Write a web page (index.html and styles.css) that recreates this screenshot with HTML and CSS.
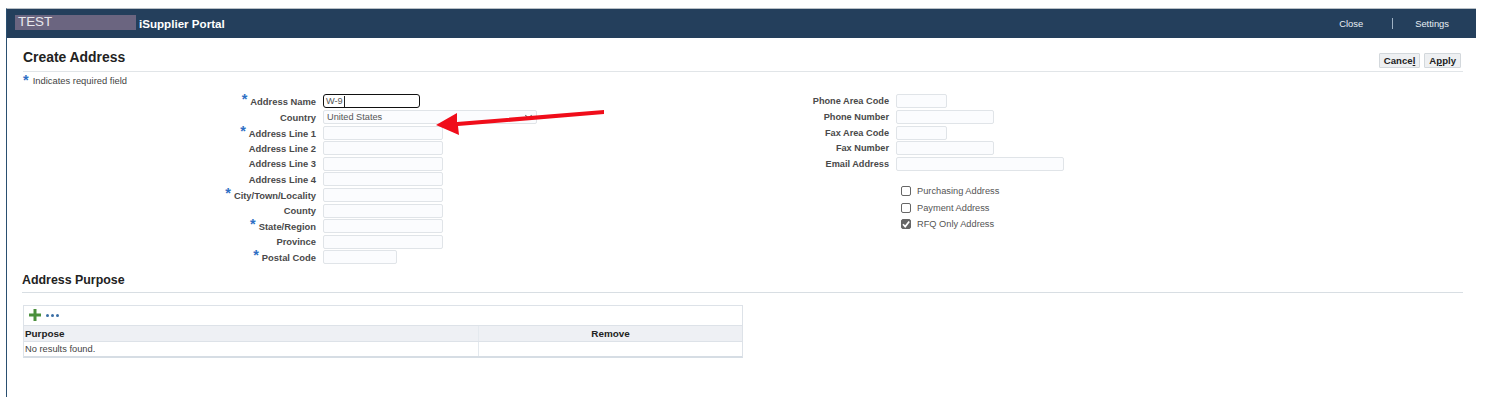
FILE: index.html
```html
<!DOCTYPE html>
<html lang="en">
<head>
<meta charset="utf-8">
<title>Create Address</title>
<link rel="stylesheet" href="styles.css">
</head>
<body>
<div class="frame">
  <header class="topbar">
    <div class="brand"><span class="env">TEST</span><span class="portal">iSupplier Portal</span></div>
    <nav class="topnav"><span class="nav-close">Close</span><span class="nav-sep"></span><span class="nav-settings">Settings</span></nav>
  </header>
  <main class="content">
    <div class="title-row">
      <h1 class="h1">Create Address</h1>
      <div class="actions"><button class="btn">Cance<u>l</u></button><button class="btn">A<u>p</u>ply</button></div>
    </div>
    <div class="req-note"><span class="star">*</span><span>Indicates required field</span></div>
    <div class="form">
      <div class="form-left">
        <div class="row"><label class="lbl"><span class="star">*</span>Address Name</label><div class="inp focus">W-9<span class="caret"></span></div></div>
        <div class="row"><label class="lbl">Country</label><div class="inp select">United States<span class="sel-arrow"></span></div></div>
        <div class="row"><label class="lbl"><span class="star">*</span>Address Line 1</label><div class="inp w120"></div></div>
        <div class="row"><label class="lbl">Address Line 2</label><div class="inp w120"></div></div>
        <div class="row"><label class="lbl">Address Line 3</label><div class="inp w120"></div></div>
        <div class="row"><label class="lbl">Address Line 4</label><div class="inp w120"></div></div>
        <div class="row"><label class="lbl"><span class="star">*</span>City/Town/Locality</label><div class="inp w120"></div></div>
        <div class="row"><label class="lbl">County</label><div class="inp w120"></div></div>
        <div class="row"><label class="lbl"><span class="star">*</span>State/Region</label><div class="inp w120"></div></div>
        <div class="row"><label class="lbl">Province</label><div class="inp w120"></div></div>
        <div class="row"><label class="lbl"><span class="star">*</span>Postal Code</label><div class="inp w74"></div></div>
      </div>
      <div class="form-right">
        <div class="row"><label class="lbl">Phone Area Code</label><div class="inp w51"></div></div>
        <div class="row"><label class="lbl">Phone Number</label><div class="inp w98"></div></div>
        <div class="row"><label class="lbl">Fax Area Code</label><div class="inp w51"></div></div>
        <div class="row"><label class="lbl">Fax Number</label><div class="inp w98"></div></div>
        <div class="row"><label class="lbl">Email Address</label><div class="inp w168"></div></div>
        <div class="checks">
          <div class="check"><span class="box"></span>Purchasing Address</div>
          <div class="check"><span class="box"></span>Payment Address</div>
          <div class="check"><span class="box on"><svg viewBox="0 0 10 10" width="10" height="10"><path d="M2 5.2 4.2 7.6 8.2 2.4" fill="none" stroke="#fff" stroke-width="1.7"/></svg></span>RFQ Only Address</div>
        </div>
      </div>
    </div>
    <h2 class="h2">Address Purpose</h2>
    <div class="table-wrap">
      <div class="toolbar">
        <svg class="plus" viewBox="0 0 12 12" width="12" height="12"><path d="M4.5 0h3v4.5H12v3H7.5V12h-3V7.5H0v-3h4.5z" fill="#4a8f3c"/></svg>
        <span class="dots"><i></i><i></i><i></i></span>
      </div>
      <div class="thead"><div class="c1">Purpose</div><div class="c2">Remove</div></div>
      <div class="tbody"><div class="c1">No results found.</div><div class="c2"></div></div>
    </div>
  </main>
  <svg class="arrow" viewBox="0 0 170 30" width="170" height="30"><path d="M0 16 21 4 21 13 168 1 168 5 22 17 23 26z" fill="#f00d1a"/></svg>
</div>
</body>
</html>
```
FILE: styles.css
```css
html, body { margin: 0; padding: 0; background: #fff; }
body { font-family: "Liberation Sans", Arial, sans-serif; color: #333; overflow: hidden; }
.frame { position: relative; margin: 8px 0 0 6px; width: 1470px; height: 389px; border-top: 1px solid #b9c0c6; border-left: 1px solid #2a4f70; box-sizing: border-box; }
.topbar { height: 29px; background: #243f5c; display: flex; justify-content: space-between; align-items: center; color: #fff; }
.brand { display: flex; align-items: center; margin-left: 8px; }
.env { width: 121px; height: 15px; margin-top: -2px; padding: 0 0 0 3px; box-sizing: border-box; background: #6b6580; color: #e8e8ee; font-size: 13.4px; line-height: 14px; }
.portal { margin-left: 3px; font-size: 11.6px; font-weight: bold; }
.topnav { display: flex; align-items: center; font-size: 9.4px; color: #e8eef4; }
.nav-close { margin-right: 29px; }
.nav-sep { width: 1px; height: 11px; background: #9fb2c4; margin-right: 22px; }
.nav-settings { margin-right: 27px; }
.content { padding: 0 0 0 16px; }
.title-row { position: relative; height: 34px; border-bottom: 1px solid #e1e5e8; width: 1440px; display: flex; justify-content: space-between; align-items: flex-end; box-sizing: border-box; margin-bottom: 1px; }
.h1 { margin: 0 0 5px; font-size: 13.9px; font-weight: bold; color: #222; line-height: 17px; }
.actions { display: flex; gap: 4px; margin: 0 2px 3px 0; }
.btn { height: 15px; padding: 0 4px; border: 1px solid #d3d8dc; background: #eef0f2; color: #222; font: bold 9.6px "Liberation Sans", Arial, sans-serif; line-height: 12px; border-radius: 1px; }
.req-note { display: flex; font-size: 9.4px; color: #444; height: 21px; align-items: flex-start; padding-top: 2px; box-sizing: border-box; }
.req-note span:last-child { margin-left: 2px; margin-top: 0; font-weight: normal; }
.star { color: #2f6fc4; font-size: 14.5px; line-height: 10px; font-weight: bold; margin-right: 2px; }
.form { display: flex; height: 178px; margin-top: -0.4px; }
.form-left { width: 573px; }
.row { display: flex; height: 15.6px; align-items: center; }
.lbl { width: 293px; flex: none; text-align: right; font-size: 9.4px; font-weight: bold; color: #4a4a4a; margin-right: 7px; white-space: nowrap; }
.form-right .lbl { font-size: 9.2px; }
.lbl .star { margin-right: 3px; position: relative; top: -1px; }
.inp { height: 14px; box-sizing: border-box; border: 1px solid #e0e4e8; background: #fbfcfe; border-radius: 2px; font-size: 9.2px; line-height: 12px; color: #555; padding-left: 3px; }
.w120 { width: 120px; } .w74 { width: 74px; } .w51 { width: 51px; } .w98 { width: 98px; } .w168 { width: 168px; }
.focus { width: 97px; border: 1.5px solid #111; border-radius: 3px; background: #fff; padding-left: 2px; display: flex; align-items: center; }
.caret { width: 1px; height: 11px; background: #222; margin-left: 1px; }
.select { width: 214px; position: relative; }
.sel-arrow { position: absolute; right: 5px; top: 2px; width: 5px; height: 5px; box-sizing: border-box; border-right: 1px solid #666; border-bottom: 1px solid #666; transform: rotate(45deg); }
.checks { margin: 11.4px 0 0 305px; }
.check { display: flex; align-items: center; height: 16.4px; font-size: 9.25px; color: #555; }
.box { width: 10px; height: 10px; box-sizing: border-box; border: 1px solid #666; border-radius: 2px; margin-right: 6px; background: #fff; display: flex; }
.box.on { background: #666; border-color: #666; }
.box.on svg { margin: -1px; }
.h2 { margin: 0 0 0 -1px; height: 20px; width: 1441px; border-bottom: 1px solid #d8dee3; font-size: 12.4px; line-height: 17px; font-weight: bold; color: #222; }
.table-wrap { width: 720px; margin-top: 12px; border: 1px solid #dde2e8; border-bottom: 2px solid #d6dde4; box-sizing: border-box; font-size: 9.3px; }
.toolbar { height: 19px; display: flex; align-items: center; padding-left: 5px; border-bottom: 1px solid #dde2e8; }
.plus { display: block; }
.dots { display: flex; gap: 2px; margin-left: 5px; }
.dots i { width: 3px; height: 3px; border-radius: 50%; background: #3a6ea5; }
.thead, .tbody { display: flex; }
.thead { height: 15px; background: #eef0f4; border-bottom: 1px solid #dde2e8; font-size: 9.9px; font-weight: bold; color: #222; line-height: 15px; }
.tbody { height: 14px; color: #444; line-height: 14px; }
.c1 { width: 455px; padding-left: 1px; box-sizing: border-box; border-right: 1px solid #e4e9ee; }
.c2 { flex: 1; text-align: center; }
.arrow { position: absolute; left: 429px; top: 100px; }
```
